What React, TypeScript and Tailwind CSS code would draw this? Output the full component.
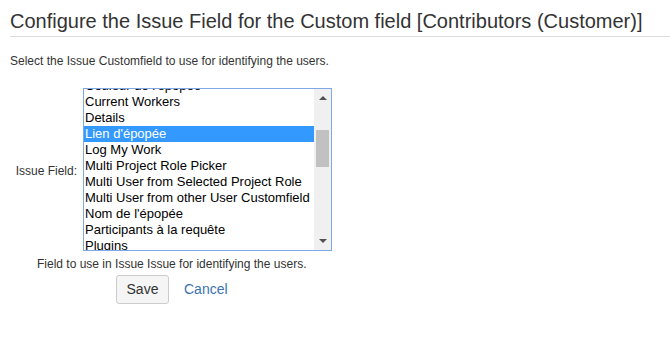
import React from "react";

const options = [
  "Couleur de l'épopée",
  "Current Workers",
  "Details",
  "Lien d'épopée",
  "Log My Work",
  "Multi Project Role Picker",
  "Multi User from Selected Project Role",
  "Multi User from other User Customfield",
  "Nom de l'épopée",
  "Participants à la requête",
  "Plugins",
];

const App = () => {
  const selected = "Lien d'épopée";
  return (
    <div
      className="w-[670px] h-[341px] bg-white text-[#333] overflow-hidden"
      style={{ fontFamily: '"Liberation Sans", Arial, sans-serif' }}
    >
      <div className="pl-[10px] pt-[8px]">
        <h1 className="text-[20px] leading-[26px] pb-[2px] border-b border-[#dcdcdc]">
          Configure the Issue Field for the Custom field [Contributors (Customer)]
        </h1>
        <p className="text-[12px] leading-[14px] mt-[17px]">
          Select the Issue Customfield to use for identifying the users.
        </p>
      </div>

      <div className="flex mt-[20px]">
        <div className="w-[83px] flex items-center justify-end pr-[6px]">
          <span className="text-[12px] leading-[14px] mt-[3px]">Issue Field:</span>
        </div>
        <div className="flex w-[249px] h-[163px] border border-[#7fa8e6] overflow-hidden">
          <div className="flex-1 overflow-hidden">
            <div className="-mt-[11px]">
              {options.map((o) => (
                <div
                  key={o}
                  className={
                    "h-[16px] leading-[16px] text-[13px] pl-[1px] whitespace-nowrap " +
                    (o === selected ? "bg-[#3399ff] text-white" : "text-black")
                  }
                >
                  {o}
                </div>
              ))}
            </div>
          </div>
          <div className="w-[17px] bg-[#f0f0f0] flex flex-col items-center">
            <div className="h-[17px] flex items-center justify-center">
              <svg width="8" height="5" viewBox="0 0 8 5">
                <path d="M0 5 L4 1 L8 5 Z" fill="#505050" />
              </svg>
            </div>
            <div className="w-[13px] h-[37px] bg-[#c1c1c1] mt-[24px]" />
            <div className="flex-1" />
            <div className="h-[17px] flex items-center justify-center">
              <svg width="8" height="5" viewBox="0 0 8 5">
                <path d="M0 0 L8 0 L4 4 Z" fill="#505050" />
              </svg>
            </div>
          </div>
        </div>
      </div>

      <p className="text-[12px] leading-[14px] ml-[37px] mt-[6px]">
        Field to use in Issue Issue for identifying the users.
      </p>

      <div className="flex items-center ml-[116px] mt-[4px]">
        <button className="w-[53px] h-[29px] bg-[#f5f5f5] border border-[#ccc] rounded-[3px] text-[14px] text-[#333]">
          Save
        </button>
        <a className="ml-[15px] text-[14px] text-[#3b73af]">Cancel</a>
      </div>
    </div>
  );
};

export default App;
